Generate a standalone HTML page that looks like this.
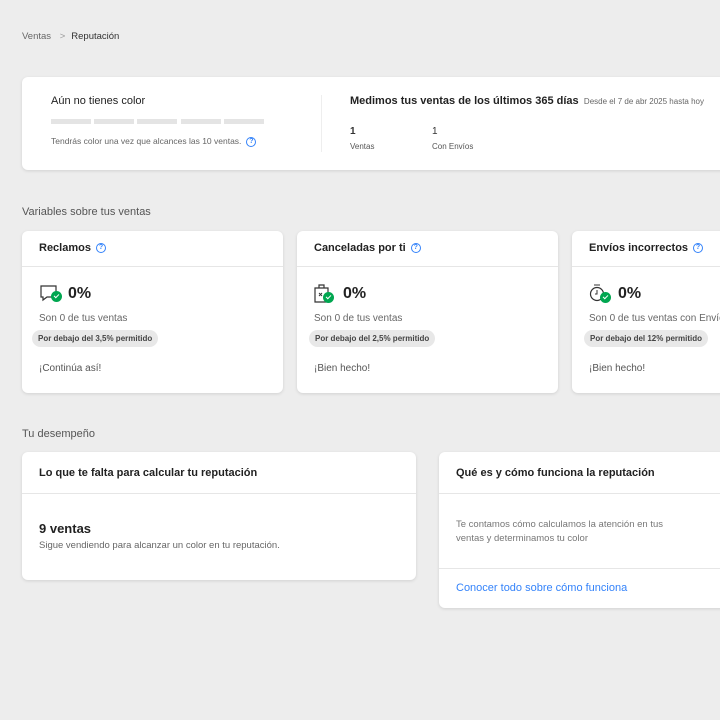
<html><head><style>
body{margin:0;width:720px;height:720px;background:#ededed;font-family:"Liberation Sans",sans-serif;color:#333;position:relative;overflow:hidden}
.a{position:absolute;white-space:nowrap}
.card{position:absolute;background:#fff;border-radius:6px;box-shadow:0 1px 3px rgba(0,0,0,.12)}
.q{display:inline-block;width:8px;height:8px;border:1.2px solid #3483fa;border-radius:50%;color:#3483fa;font-size:7px;line-height:8px;text-align:center;font-weight:bold;vertical-align:middle;margin-left:5px}
.hl{position:absolute;left:0;right:0;height:1px;background:#e6e6e6}
.pill{position:absolute;background:#e8e8e8;border-radius:9px;font-size:8px;font-weight:bold;color:#444;padding:4px 6px;white-space:nowrap}
.bar{position:absolute;top:119px;width:40px;height:5px;background:#e4e4e4}
.chk{position:absolute;width:11px;height:11px;border-radius:50%;background:#00a650}
.chk:after{content:"";position:absolute;left:3px;top:2.5px;width:4px;height:2px;border-left:1.3px solid #fff;border-bottom:1.3px solid #fff;transform:rotate(-45deg)}
</style></head><body>
<div class="a" style="left:22px;top:31px;font-size:9.5px;color:#666">Ventas <span style="margin:0 6px;color:#999">&gt;</span><span style="color:#333">Reputación</span></div>

<div class="card" style="left:22px;top:77px;width:710px;height:93px"></div>
<div class="a" style="left:51px;top:95px;font-size:11px;color:#222">Aún no tienes color</div>
<div class="bar" style="left:51px"></div><div class="bar" style="left:94px"></div><div class="bar" style="left:137px"></div><div class="bar" style="left:181px"></div><div class="bar" style="left:224px"></div>
<div class="a" style="left:51px;top:136px;font-size:8.5px;color:#666">Tendrás color una vez que alcances las 10 ventas.<span class="q">?</span></div>
<div class="a" style="left:321px;top:95px;width:1px;height:57px;background:#eee"></div>
<div class="a" style="left:350px;top:95px;font-size:11px;font-weight:bold;color:#222">Medimos tus ventas de los últimos 365 días <span style="font-size:8px;font-weight:normal;color:#666">&nbsp;Desde el 7 de abr 2025 hasta hoy</span></div>
<div class="a" style="left:350px;top:126px;font-size:10px;font-weight:bold">1</div>
<div class="a" style="left:350px;top:142px;font-size:8px;color:#555">Ventas</div>
<div class="a" style="left:432px;top:126px;font-size:10px">1</div>
<div class="a" style="left:432px;top:142px;font-size:8px;color:#555">Con Envíos</div>

<div class="a" style="left:22px;top:206px;font-size:11px;color:#555">Variables sobre tus ventas</div>

<div class="card" style="left:22px;top:231px;width:261px;height:162px"><div class="hl" style="top:35px"></div>
<div class="a" style="left:17px;top:11px;font-size:11px;font-weight:bold;color:#222">Reclamos<span class="q">?</span></div>
<svg class="a" style="left:18px;top:54px" width="20" height="18"><path d="M1 1h15v11H7l-4 3v-3H1z" fill="none" stroke="#333" stroke-width="1.2"/></svg><div class="chk" style="left:29px;top:60px"></div>
<div class="a" style="left:46px;top:54px;font-size:16px;font-weight:bold;color:#222">0%</div>
<div class="a" style="left:17px;top:82px;font-size:10px;color:#666">Son 0 de tus ventas</div>
<div class="pill" style="left:10px;top:99px">Por debajo del 3,5% permitido</div>
<div class="a" style="left:17px;top:132px;font-size:10px;color:#555">¡Continúa así!</div></div>

<div class="card" style="left:297px;top:231px;width:261px;height:162px"><div class="hl" style="top:35px"></div>
<div class="a" style="left:17px;top:11px;font-size:11px;font-weight:bold;color:#222">Canceladas por ti<span class="q">?</span></div>
<svg class="a" style="left:17px;top:53px" width="18" height="20"><path d="M1 4h13v14H1z M5 4V1h5v3" fill="none" stroke="#333" stroke-width="1.2"/><path d="M5 9l3 3M8 9l-3 3" stroke="#333"/></svg><div class="chk" style="left:26px;top:61px"></div>
<div class="a" style="left:46px;top:54px;font-size:16px;font-weight:bold;color:#222">0%</div>
<div class="a" style="left:17px;top:82px;font-size:10px;color:#666">Son 0 de tus ventas</div>
<div class="pill" style="left:12px;top:99px">Por debajo del 2,5% permitido</div>
<div class="a" style="left:17px;top:132px;font-size:10px;color:#555">¡Bien hecho!</div></div>

<div class="card" style="left:572px;top:231px;width:261px;height:162px"><div class="hl" style="top:35px"></div>
<div class="a" style="left:17px;top:11px;font-size:11px;font-weight:bold;color:#222">Envíos incorrectos<span class="q">?</span></div>
<svg class="a" style="left:17px;top:52px" width="18" height="20"><circle cx="8" cy="11" r="6.5" fill="none" stroke="#333" stroke-width="1.2"/><path d="M5 2h6M8 7v4H6" fill="none" stroke="#333"/></svg><div class="chk" style="left:28px;top:61px"></div>
<div class="a" style="left:46px;top:54px;font-size:16px;font-weight:bold;color:#222">0%</div>
<div class="a" style="left:17px;top:82px;font-size:10px;color:#666">Son 0 de tus ventas con Envíos</div>
<div class="pill" style="left:12px;top:99px">Por debajo del 12% permitido</div>
<div class="a" style="left:17px;top:132px;font-size:10px;color:#555">¡Bien hecho!</div></div>

<div class="a" style="left:22px;top:428px;font-size:11px;color:#555">Tu desempeño</div>

<div class="card" style="left:22px;top:452px;width:394px;height:128px"><div class="hl" style="top:41px"></div>
<div class="a" style="left:17px;top:15px;font-size:11px;font-weight:bold;color:#222">Lo que te falta para calcular tu reputación</div>
<div class="a" style="left:17px;top:69px;font-size:13px;font-weight:bold;color:#222">9 ventas</div>
<div class="a" style="left:17px;top:88px;font-size:9.5px;color:#666">Sigue vendiendo para alcanzar un color en tu reputación.</div></div>

<div class="card" style="left:439px;top:452px;width:300px;height:156px"><div class="hl" style="top:41px"></div><div class="hl" style="top:116px"></div>
<div class="a" style="left:17px;top:15px;font-size:11px;font-weight:bold;color:#222">Qué es y cómo funciona la reputación</div>
<div class="a" style="left:17px;top:66px;font-size:9.5px;color:#777;line-height:14px">Te contamos cómo calculamos la atención en tus<br>ventas y determinamos tu color</div>
<div class="a" style="left:17px;top:130px;font-size:11px;color:#3483fa">Conocer todo sobre cómo funciona</div></div>
</body></html>
